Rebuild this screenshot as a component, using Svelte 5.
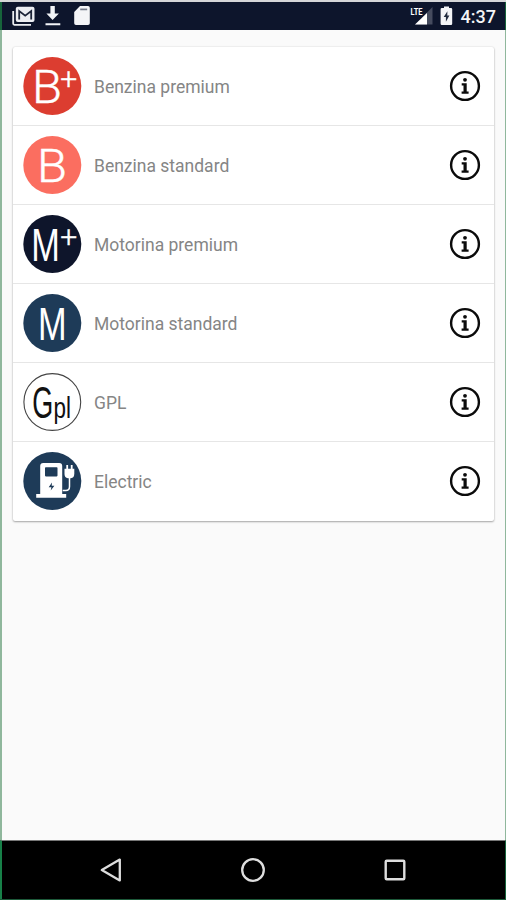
<script>
  const fuels = [
    { name: 'Benzina premium', letter: 'B', plus: true, fill: '#dc3d30', x: 10, w: 30 },
    { name: 'Benzina standard', letter: 'B', plus: false, fill: '#fb6e60', x: 15, w: 30 },
    { name: 'Motorina premium', letter: 'M', plus: true, fill: '#0e152b', x: 9.3, w: 28.6 },
    { name: 'Motorina standard', letter: 'M', plus: false, fill: '#1e3b58', x: 15.9, w: 28.6 },
    { name: 'GPL', kind: 'gpl' },
    { name: 'Electric', kind: 'electric', fill: '#1e3b58' }
  ];
</script>

<div class="screen">
  <header class="status">
    <div class="left">
      <svg class="mail" width="24" height="20" viewBox="0 0 24 20">
        <path d="M1.2 5v12.6q0 1.2 1.2 1.2H19" fill="none" stroke="#eceef2" stroke-width="1.8" />
        <rect x="3.8" y=".8" width="18.7" height="15.2" rx="2" fill="#eceef2" />
        <path d="M7.2 13.5V5l6 4.7 6-4.7v8.5" fill="none" stroke="#1c2438" stroke-width="1.8" />
      </svg>
      <svg class="download" width="16" height="20" viewBox="0 0 16 20">
        <path d="M5.4 0h4.4v7.4h4.1L7.6 14 1.4 7.4h4zM.5 17.3h14.8v2H.5z" fill="#f2f4f7" />
      </svg>
      <svg class="card-icon" width="16" height="20" viewBox="0 0 16 20">
        <path d="M6 0h8q1.8 0 1.8 1.8v15.5q0 1.8-1.8 1.8H2Q.2 19.1.2 17.3V6z" fill="#f4f5f7" />
        <path d="M6.2 3.4h7" stroke="#737987" stroke-width="1.7" />
      </svg>
    </div>
    <div class="right">
      <svg width="24" height="20" viewBox="0 0 24 20">
        <path d="M22.5 1v17.5H5z" fill="#454b5e" />
        <path d="M17 7v11.5H5z" fill="#fff" />
        <text x=".5" y="9" class="lte" textLength="12" lengthAdjust="spacingAndGlyphs">LTE</text>
      </svg>
      <svg class="battery" width="13" height="20" viewBox="0 0 13 20">
        <path d="M4 .5h5V2h2q1.2 0 1.2 1.2v14.6q0 1.2-1.2 1.2H1.8Q.6 19 .6 17.8V3.2Q.6 2 1.8 2H4z" fill="#f4f5f7" />
        <path d="M7.4 5.2 3.7 11h2.2v4.7L9.4 9.6H7.3z" fill="#222b3e" />
      </svg>
      <span class="time">4:37</span>
    </div>
  </header>

  <main>
    <ul class="list">
      {#each fuels as fuel}
        <li>
          <svg class="badge" width="60" height="60" viewBox="0 0 60 60">
            {#if fuel.kind === 'gpl'}
              <circle cx="30.3" cy="30" r="28.4" fill="#fff" stroke="#444" stroke-width="1.1" />
              <text x="10.2" y="46.3" class="gpl" font-size="45" textLength="21" lengthAdjust="spacingAndGlyphs">G</text>
              <text x="31.6" y="46" class="gpl" font-size="30" textLength="17.5" lengthAdjust="spacingAndGlyphs">pl</text>
            {:else}
              <circle cx="30.3" cy="30" r="29" fill={fuel.fill} />
              {#if fuel.kind === 'electric'}
                <g transform="translate(.7 0)">
                  <path d="M17.5 43V15q0-3 3-3h16q3 0 3 3v28H43.5v3.7H13.5V43z" fill="#fff" />
                  <rect x="22.3" y="16.2" width="12.5" height="9.2" rx=".8" fill="#1e3b58" />
                  <path d="M29.3 31.5 26 36.2h2.7L28 39.5l3.7-4.7H29z" fill="#1e3b58" />
                  <path d="M41.8 17.8h9.8v5q0 4-3.4 4.5h-3q-3.4-.5-3.4-4.5z" fill="#fff" />
                  <path d="M44.5 18v-4M49 18v-4" stroke="#fff" stroke-width="1.8" />
                  <path d="M46.8 27v8.5q0 4-3.6 4H40" fill="none" stroke="#fff" stroke-width="1.5" />
                </g>
              {:else}
                <text x={fuel.x} y="47.2" class="letter" class:narrow={fuel.letter === 'M'} textLength={fuel.w} lengthAdjust="spacingAndGlyphs">{fuel.letter}</text>
                {#if fuel.plus}
                  <text x="38.3" y="33.2" class="plus">+</text>
                {/if}
              {/if}
            {/if}
          </svg>
          <span class="name">{fuel.name}</span>
          <svg class="info" width="32" height="32" viewBox="0 0 32 32">
            <circle cx="16" cy="16" r="13.9" fill="none" stroke="#0b0b0b" stroke-width="2.4" />
            <circle cx="16" cy="9.8" r="1.9" fill="#0b0b0b" />
            <path d="M12.7 13.2h5v8.3h1.9v2.2h-7v-2.2h1.9v-6.1h-1.8z" fill="#0b0b0b" />
          </svg>
        </li>
      {/each}
    </ul>
  </main>

  <nav>
    <svg width="24" height="26" viewBox="0 0 24 26"><path d="M20.8 2.6v20.8L2.8 13z" fill="none" stroke="#dedede" stroke-width="2.3" stroke-linejoin="round" /></svg>
    <svg width="26" height="26" viewBox="0 0 26 26"><circle cx="13" cy="13" r="10.8" fill="none" stroke="#dedede" stroke-width="2.3" /></svg>
    <svg width="24" height="26" viewBox="0 0 24 26"><rect x="2.7" y="3.7" width="18.6" height="18.6" rx="1" fill="none" stroke="#dedede" stroke-width="2.4" /></svg>
  </nav>
</div>

<style>
  .screen {
    box-sizing: border-box;
    width: 506px;
    height: 900px;
    display: flex;
    flex-direction: column;
    border-top: 2px solid #d5d6d8;
    border-bottom: 1px solid #1d5a3a;
    background: #fafafa;
    font-family: Roboto, sans-serif;
  }
  svg {
    display: block;
    flex: none;
  }
  .status {
    box-sizing: border-box;
    height: 28px;
    display: flex;
    justify-content: space-between;
    background: #0d152c;
    border-left: 2px solid #16633b;
    border-right: 1px solid #16633b;
    padding: 4px 9px 0 10px;
  }
  .left,
  .right {
    display: flex;
    align-items: flex-start;
  }
  .download {
    margin-left: 9px;
  }
  .card-icon {
    margin-left: 13px;
  }
  .battery {
    margin-left: 6px;
  }
  .lte {
    font-size: 9.5px;
    font-weight: 700;
    fill: #fff;
  }
  .time {
    margin-left: 8px;
    font-size: 18px;
    line-height: 21px;
    font-weight: 500;
    color: #f4f5f7;
  }
  main {
    flex: 1;
    border-left: 2px solid #8fb79c;
    border-right: 1px solid #8fb79c;
    padding: 17px 11px 0 11px;
  }
  .list {
    list-style: none;
    margin: 0;
    padding: 0;
    background: #fff;
    border-radius: 2px;
    box-shadow: 0 1px 2px rgba(0, 0, 0, 0.32), 0 0 2px rgba(0, 0, 0, 0.12);
  }
  li {
    box-sizing: border-box;
    height: 79px;
    display: flex;
    align-items: center;
    padding: 0 13px 0 9px;
    border-bottom: 1px solid #e6e6e6;
  }
  li:last-child {
    border-bottom-color: transparent;
  }
  .name {
    flex: 1;
    margin-left: 12px;
    padding-top: 2px;
    font-size: 17.5px;
    color: #858585;
  }
  .letter {
    font-size: 46px;
    font-weight: 300;
    fill: #fff;
    stroke: #fff;
    stroke-width: 0.4px;
  }
  .letter.narrow {
    font-family: 'Liberation Sans', sans-serif;
    font-weight: 400;
    stroke: none;
  }
  .plus {
    font-size: 30px;
    font-weight: 300;
    fill: #fff;
    stroke: #fff;
    stroke-width: 0.4px;
  }
  .gpl {
    fill: #111;
    font-family: 'Liberation Sans', sans-serif;
  }
  nav {
    box-sizing: border-box;
    height: 59px;
    display: flex;
    justify-content: center;
    align-items: center;
    gap: 117px;
    padding-right: 1px;
    background: #000;
    border-left: 2px solid #178048;
    border-right: 1px solid #16633b;
    border-top: 1px solid #777;
  }
</style>
